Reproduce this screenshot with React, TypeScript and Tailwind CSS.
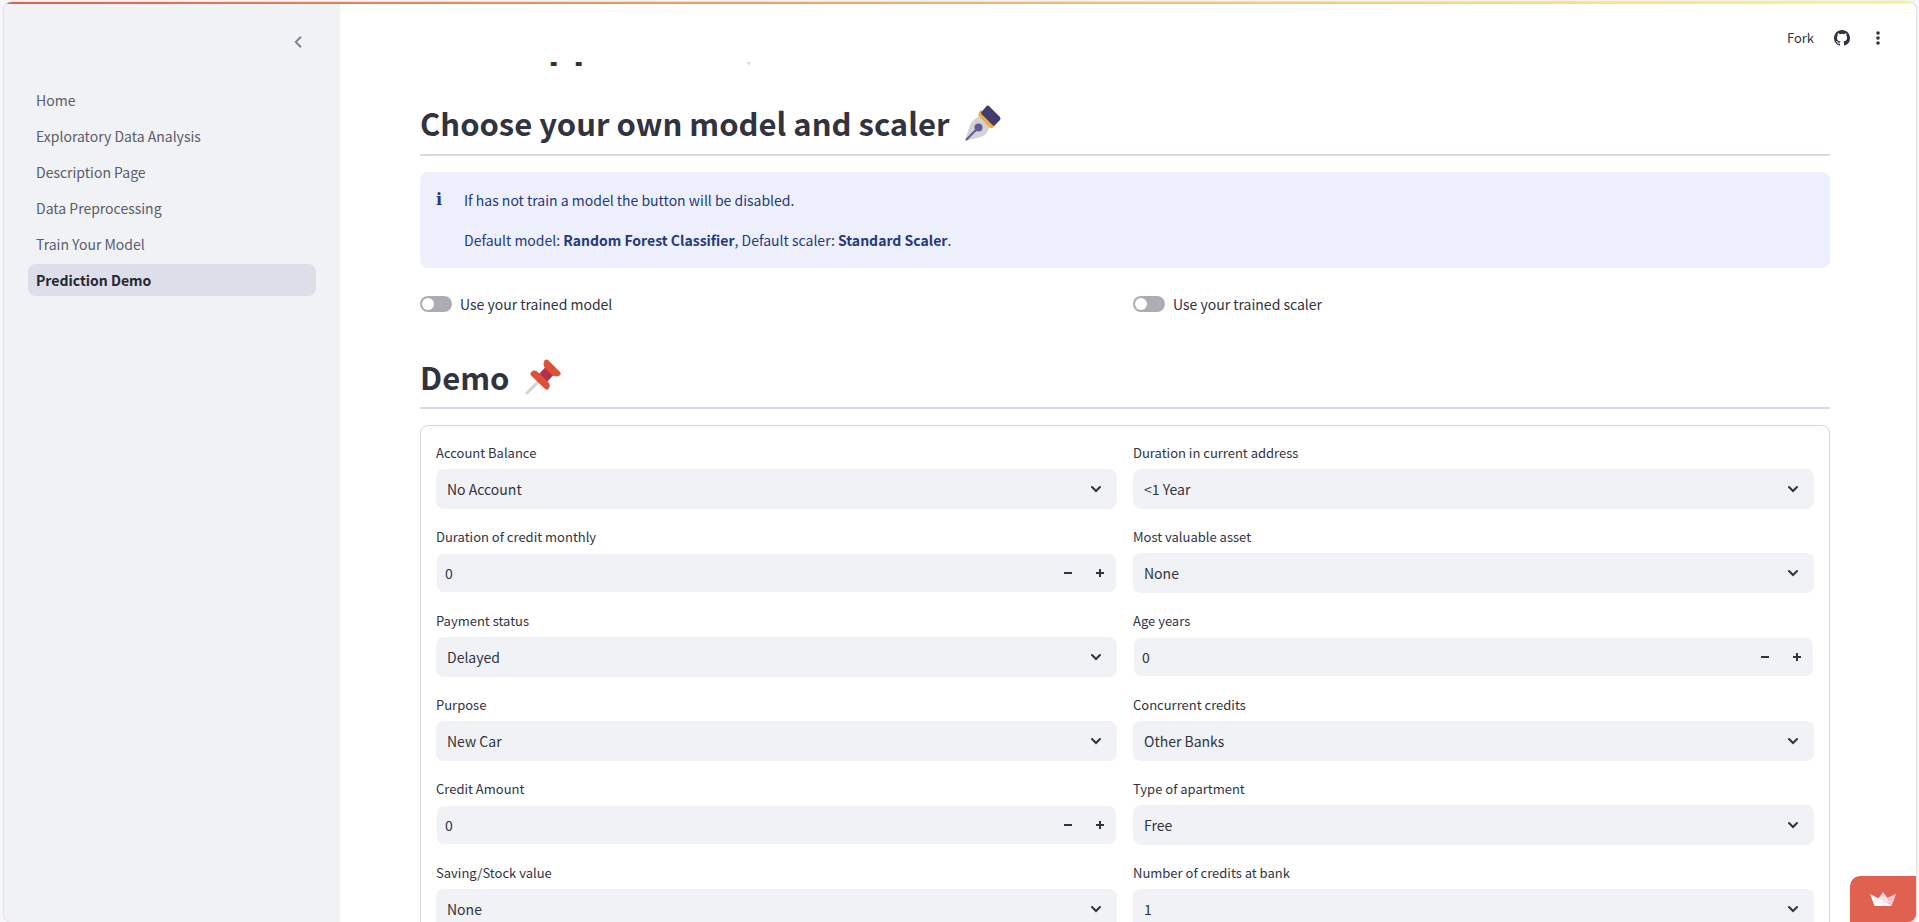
import { useId, useState } from "react";

const pages = [
  "Home",
  "Exploratory Data Analysis",
  "Description Page",
  "Data Preprocessing",
  "Train Your Model",
  "Prediction Demo",
];

type Field =
  | { kind: "select"; label: string; options: string[] }
  | { kind: "number"; label: string };

const leftFields: Field[] = [
  { kind: "select", label: "Account Balance", options: ["No Account"] },
  { kind: "number", label: "Duration of credit monthly" },
  { kind: "select", label: "Payment status", options: ["Delayed"] },
  { kind: "select", label: "Purpose", options: ["New Car"] },
  { kind: "number", label: "Credit Amount" },
  { kind: "select", label: "Saving/Stock value", options: ["None"] },
];

const rightFields: Field[] = [
  { kind: "select", label: "Duration in current address", options: ["<1 Year"] },
  { kind: "select", label: "Most valuable asset", options: ["None"] },
  { kind: "number", label: "Age years" },
  { kind: "select", label: "Concurrent credits", options: ["Other Banks"] },
  { kind: "select", label: "Type of apartment", options: ["Free"] },
  { kind: "select", label: "Number of credits at bank", options: ["1"] },
];

function ChevronDown() {
  return (
    <svg viewBox="0 0 10 10" className="h-[10px] w-[10px]" fill="none" stroke="currentColor" strokeWidth="2" strokeLinecap="round" aria-hidden="true">
      <path d="M1 3l4 4 4-4" />
    </svg>
  );
}

function SelectField({ label, options }: { label: string; options: string[] }) {
  const id = useId();
  return (
    <div className="flex flex-col gap-1">
      <label htmlFor={id} className="text-[13px] leading-6">
        {label}
      </label>
      <div className="grid items-center">
        <select
          id={id}
          className="col-start-1 row-start-1 h-10 w-full appearance-none rounded-lg bg-[#f0f2f6] pr-10 pl-[11px] text-sm outline-none"
        >
          {options.map((o) => (
            <option key={o}>{o}</option>
          ))}
        </select>
        <span className="pointer-events-none col-start-1 row-start-1 mr-4 justify-self-end">
          <ChevronDown />
        </span>
      </div>
    </div>
  );
}

function NumberField({ label }: { label: string }) {
  const id = useId();
  const [value, setValue] = useState(0);
  return (
    <div className="flex flex-col gap-1">
      <label htmlFor={id} className="text-[13px] leading-6">
        {label}
      </label>
      <div className="flex h-10 overflow-hidden rounded-lg border border-white bg-[#f0f2f6]">
        <input
          id={id}
          inputMode="numeric"
          value={value}
          onChange={(e) => setValue(Number(e.target.value) || 0)}
          className="min-w-0 flex-1 bg-transparent px-2 text-sm outline-none"
        />
        <button
          type="button"
          aria-label="Decrease"
          onClick={() => setValue(value - 1)}
          className="flex w-8 items-center justify-center"
        >
          <svg viewBox="0 0 8 8" className="h-2 w-2" aria-hidden="true">
            <path d="M0 3h8v2H0z" fill="currentColor" />
          </svg>
        </button>
        <button
          type="button"
          aria-label="Increase"
          onClick={() => setValue(value + 1)}
          className="flex w-8 items-center justify-center"
        >
          <svg viewBox="0 0 8 8" className="h-2 w-2" aria-hidden="true">
            <path d="M3 0h2v3h3v2H5v3H3V5H0V3h3z" fill="currentColor" />
          </svg>
        </button>
      </div>
    </div>
  );
}

function FieldColumn({ fields }: { fields: Field[] }) {
  return (
    <div className="flex flex-col gap-4">
      {fields.map((f) =>
        f.kind === "select" ? (
          <SelectField key={f.label} label={f.label} options={f.options} />
        ) : (
          <NumberField key={f.label} label={f.label} />
        ),
      )}
    </div>
  );
}

function Toggle({ label }: { label: string }) {
  return (
    <label className="flex h-6 items-center gap-2 text-sm">
      <input
        type="checkbox"
        role="switch"
        className="flex h-4 w-8 shrink-0 appearance-none items-center rounded-full bg-[#acacb2] px-[2px] before:h-3 before:w-3 before:rounded-full before:bg-white checked:justify-end checked:bg-[#ff4b4b]"
      />
      {label}
    </label>
  );
}

function PenNib() {
  return (
    <svg viewBox="0 0 36 36" className="h-9 w-9" aria-hidden="true">
      <path d="M15 11 25 21.500 21.500 28Q19 31.500 14 32.500L2 35.500 0.500 34 5 20Q8 14 15 11Z" fill="#d3d3d3" />
      <path d="M13.500 10.500Q13 7.500 16 5L30.500 20.500Q27.500 24.500 24.500 22.500Z" fill="#f3ad3d" />
      <path d="M16.500 7 21.500 1Q23 0 24.500 1.500L35 12Q36 13.500 35 15L29.500 20.500Q28.500 21 27.500 20L16.500 9Q15.500 8 16.500 7Z" fill="#433b6b" />
      <path d="M1.500 34.500 13 23" stroke="#635994" strokeWidth="2" strokeLinecap="round" />
      <circle cx="13.500" cy="22.500" r="4" fill="#635994" />
    </svg>
  );
}

function Pushpin() {
  return (
    <svg viewBox="0 0 36 36" className="h-9 w-9" aria-hidden="true">
      <path d="M2 34 13 23" stroke="#d3d3d3" strokeWidth="3" strokeLinecap="round" />
      <path d="M14 15 21 7.500 29 15.500 22 23Z" fill="#b4304f" />
      <path d="M19.500 1.500Q21.500-.500 24 2L34.500 12.500Q37 15 34.500 16.500 30 19 26 15L21 10Q17 6 19.500 1.500Z" fill="#dd5139" />
      <path d="M6 13.500Q9 9.500 14 14L22.500 22.500Q26.500 26 23.500 30 21.500 31.500 19.500 29.500L6.500 17Q4.500 15 6 13.500Z" fill="#dd5139" />
    </svg>
  );
}

export default function App() {
  return (
    <div className="flex h-screen bg-[#f7f7f7] pt-[2px] pr-[3px] pl-1 font-['Noto_Sans_CJK_SC',sans-serif] text-[#31333f]">
      <div className="flex min-w-0 flex-1 flex-col overflow-hidden rounded-lg bg-white shadow-[0_0_2px_rgba(0,0,0,0.3)]">
        <div className="h-[2px] shrink-0 bg-linear-to-r from-[#e0614f] via-[#f0b36c] to-[#fcfb82]" />
        <div className="flex min-h-0 flex-1">
          <aside className="flex w-[336px] shrink-0 flex-col bg-[#f0f2f6] px-6">
            <div className="flex h-20 shrink-0 items-start justify-end pt-6">
              <button type="button" aria-label="Collapse sidebar" className="flex h-7 w-9 items-center justify-center text-[#808495]">
                <svg viewBox="0 0 8 12" className="h-3 w-2" fill="none" stroke="currentColor" strokeWidth="2" aria-hidden="true">
                  <path d="M7 .8 1.800 6 7 11.200" />
                </svg>
              </button>
            </div>
            <nav className="flex flex-col gap-1">
              {pages.map((p, i) => (
                <a
                  key={p}
                  href="#"
                  className={
                    i === pages.length - 1
                      ? "rounded-lg bg-[#dcdeea] px-2 text-sm leading-8 font-semibold text-[#262730]"
                      : "rounded-lg px-2 text-sm leading-8 text-[#5b5d68]"
                  }
                >
                  {p}
                </a>
              ))}
            </nav>
          </aside>

          <div className="flex min-w-0 flex-1 flex-col">
            <header className="flex h-[58px] shrink-0 items-start justify-end gap-5 pt-[22px] pr-[30px]">
              <button type="button" className="text-[13px] leading-6">
                Fork
              </button>
              <a href="#" aria-label="View source on GitHub" className="flex h-6 items-center">
                <svg viewBox="0 0 16 16" className="h-4 w-4" fill="currentColor" aria-hidden="true">
                  <path d="M8 0C3.580 0 0 3.580 0 8c0 3.540 2.290 6.530 5.470 7.590.4.070.55-.17.55-.38v-1.490c-2.010.37-2.530-.49-2.690-.94-.09-.23-.48-.94-.82-1.130-.28-.15-.68-.52-.01-.53.63-.01 1.080.58 1.230.82.72 1.210 1.870.87 2.330.66.07-.52.28-.87.51-1.070-1.780-.2-3.640-.89-3.640-3.950 0-.87.31-1.590.82-2.150-.08-.2-.36-1.020.08-2.120 0 0 .67-.21 2.200.82a7.640 7.640 0 0 1 4 0c1.530-1.040 2.200-.82 2.200-.82.44 1.100.16 1.920.08 2.120.51.56.82 1.270.82 2.150 0 3.070-1.870 3.750-3.650 3.950.29.25.54.73.54 1.480v2.200c0 .21.15.46.55.38A8.010 8.010 0 0 0 16 8c0-4.420-3.580-8-8-8z" />
                </svg>
              </a>
              <button type="button" aria-label="Main menu" className="flex h-6 w-4 items-center justify-center">
                <svg viewBox="0 0 4 14" className="h-[14px] w-1" fill="currentColor" aria-hidden="true">
                  <circle cx="2" cy="2" r="1.800" />
                  <circle cx="2" cy="7" r="1.800" />
                  <circle cx="2" cy="12" r="1.800" />
                </svg>
              </button>
            </header>

            <main className="flex min-h-0 flex-1 flex-col overflow-hidden pr-[86px] pl-20">
              {/* the page title, scrolled almost out of view under the header */}
              <div className="flex h-5 shrink-0 items-end overflow-hidden">
                <h1 className="pb-[13px] text-[39px] leading-[56px] font-bold">Loan Application</h1>
                <svg viewBox="0 0 4 4" className="ml-1 mb-4 h-1 w-1" aria-hidden="true">
                  <path d="M0 0h4v4z" fill="#dcdcdc" />
                </svg>
              </div>
              <h2 className="flex h-[74px] shrink-0 items-center gap-4 border-b-2 border-[#d6d9e6] pt-[10px] text-[31px] leading-10 font-semibold">
                Choose your own model and scaler
                <PenNib />
              </h2>

              <div className="mt-4 flex shrink-0 gap-4 rounded-lg bg-[#edf0fc] p-4 text-sm leading-6 text-[#26397c]">
                <span className="w-3 font-['DejaVu_Serif',serif] text-base font-bold">i</span>
                <div className="flex flex-col gap-4">
                  <p>If has not train a model the button will be disabled.</p>
                  <p>
                    Default model: <strong className="font-semibold">Random Forest Classifier</strong>, Default scaler:{" "}
                    <strong className="font-semibold">Standard Scaler</strong>.
                  </p>
                </div>
              </div>

              <div className="mt-6 grid shrink-0 grid-cols-2 gap-4">
                <Toggle label="Use your trained model" />
                <Toggle label="Use your trained scaler" />
              </div>

              <h2 className="mt-5 flex h-[73px] shrink-0 items-center gap-4 border-b-2 border-[#d6d9e6] pt-[10px] text-[31px] leading-10 font-semibold">
                Demo
                <Pushpin />
              </h2>

              <form className="mt-4 grid shrink-0 grid-cols-2 gap-4 rounded-lg border border-[#d5d6d8] p-[15px]">
                <FieldColumn fields={leftFields} />
                <FieldColumn fields={rightFields} />
              </form>
            </main>
          </div>
        </div>
      </div>

      <a
        href="#"
        aria-label="Hosted with Streamlit"
        className="fixed right-[3px] bottom-0 flex h-[46px] w-[66px] items-center justify-center rounded-tl-[10px] rounded-br-lg bg-[#e0614f]"
      >
        <svg viewBox="0 0 26 14" className="h-[14px] w-[26px]" aria-hidden="true">
          <path d="M13 0 17.500 6 21 12.500 8 7Z" fill="#fbdfe4" />
          <path d="M26 2 17.500 6 21 13.500Z" fill="#f6c5cd" />
          <path d="M0 2 21 13 20.500 14H5Q4.500 14 4.200 13Z" fill="#fff" />
          <path d="M25.800 2 22 13.200Q21.700 14 21 13.500L17.500 6Z" fill="#f6c5cd" />
        </svg>
      </a>
    </div>
  );
}
